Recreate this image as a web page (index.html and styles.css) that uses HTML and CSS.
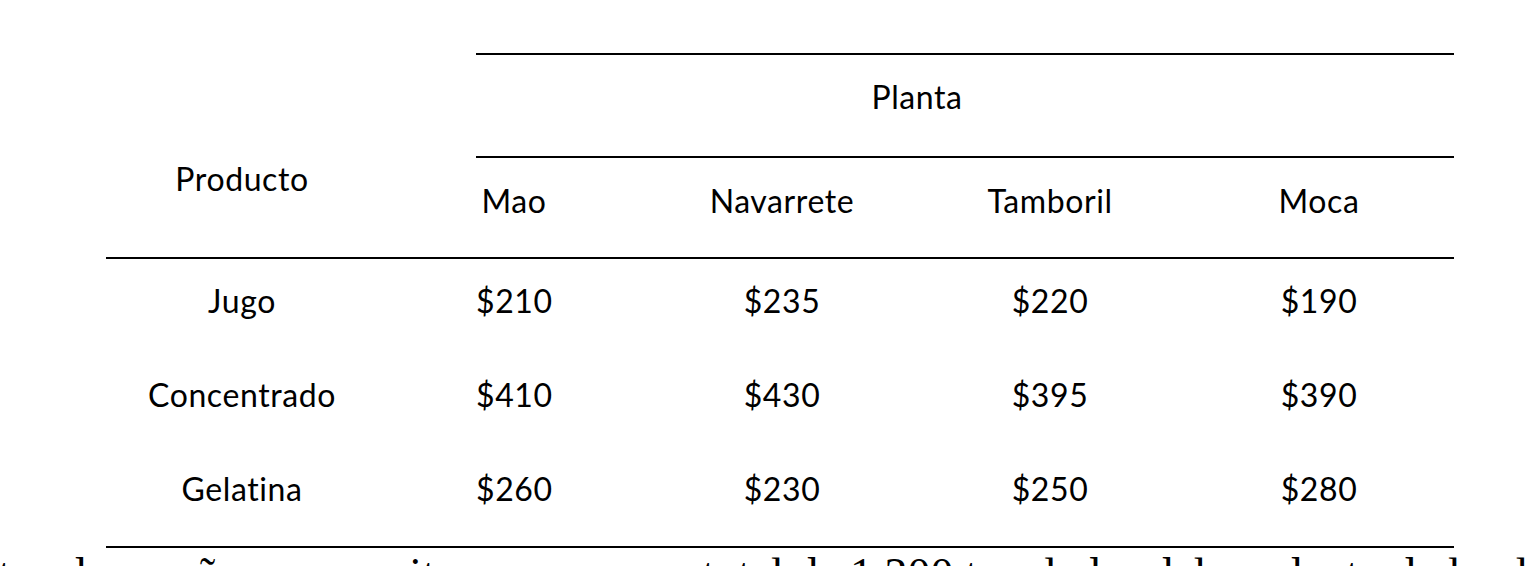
FILE: index.html
```html
<!DOCTYPE html>
<html lang="es">
<head>
<meta charset="utf-8">
<title>Tabla de costos por planta</title>
<link rel="stylesheet" href="styles.css">
</head>
<body>
<div class="page">
  <div class="table">
    <div class="head">
      <div class="cell prod-h">Producto</div>
      <div class="cell planta">Planta</div>
      <div class="cell col-h c-mao">Mao</div>
      <div class="cell col-h c-nav">Navarrete</div>
      <div class="cell col-h c-tam">Tamboril</div>
      <div class="cell col-h c-moc">Moca</div>
    </div>
    <div class="body">
      <div class="row">
        <div class="cell c-prod">Jugo</div>
        <div class="cell c-mao">$210</div>
        <div class="cell c-nav">$235</div>
        <div class="cell c-tam">$220</div>
        <div class="cell c-moc">$190</div>
      </div>
      <div class="row">
        <div class="cell c-prod">Concentrado</div>
        <div class="cell c-mao">$410</div>
        <div class="cell c-nav">$430</div>
        <div class="cell c-tam">$395</div>
        <div class="cell c-moc">$390</div>
      </div>
      <div class="row">
        <div class="cell c-prod">Gelatina</div>
        <div class="cell c-mao">$260</div>
        <div class="cell c-nav">$230</div>
        <div class="cell c-tam">$250</div>
        <div class="cell c-moc">$280</div>
      </div>
    </div>
  </div>
  <p class="para">tos de un año, se permite un consumo total de 1,200 toneladas del producto de la planta indicada en detalle</p>
</div>
</body>
</html>
```
FILE: styles.css
```css
html, body {
  margin: 0;
  padding: 0;
  background: #ffffff;
}

.page {
  width: 1530px;
  height: 566px;
  overflow: hidden;
  padding-top: 53px;
  box-sizing: border-box;
}

.table {
  margin-left: 106px;
  width: 1348px;
  font-family: "Lato", "Open Sans", "Liberation Sans", sans-serif;
  font-size: 32px;
  letter-spacing: 0.6px;
  color: #000000;
}

.cell {
  line-height: 40px;
  text-align: center;
  white-space: nowrap;
}

.head,
.row {
  display: grid;
  grid-template-columns: 272px 98px 76px 96px 268px 268px 270px;
}

.head {
  grid-template-rows: 105px 99px;
  border-bottom: 2px solid #000;
}

.prod-h {
  grid-column: 1 / 2;
  grid-row: 1 / 3;
  align-self: end;
  padding-bottom: 58px;
}

.planta {
  grid-column: 3 / 8;
  grid-row: 1 / 2;
  border-top: 2px solid #000;
  border-bottom: 2px solid #000;
  padding: 22px 96px 0 0;
  box-sizing: border-box;
}

.col-h {
  grid-row: 2 / 3;
  align-self: start;
  padding-top: 23px;
}

.c-prod { grid-column: 1 / 2; }
.c-mao { grid-column: 3 / 4; }
.c-nav { grid-column: 5 / 6; }
.c-tam { grid-column: 6 / 7; }
.c-moc { grid-column: 7 / 8; }

.body {
  padding-bottom: 5px;
  border-bottom: 2px solid #000;
}

.row {
  height: 94px;
  align-items: start;
}

.row .cell {
  padding-top: 22px;
}

.para {
  margin: 0;
  font-family: "Liberation Serif", "Times New Roman", serif;
  font-size: 46px;
  white-space: nowrap;
  color: #000;
  margin-left: -2px;
}
```
